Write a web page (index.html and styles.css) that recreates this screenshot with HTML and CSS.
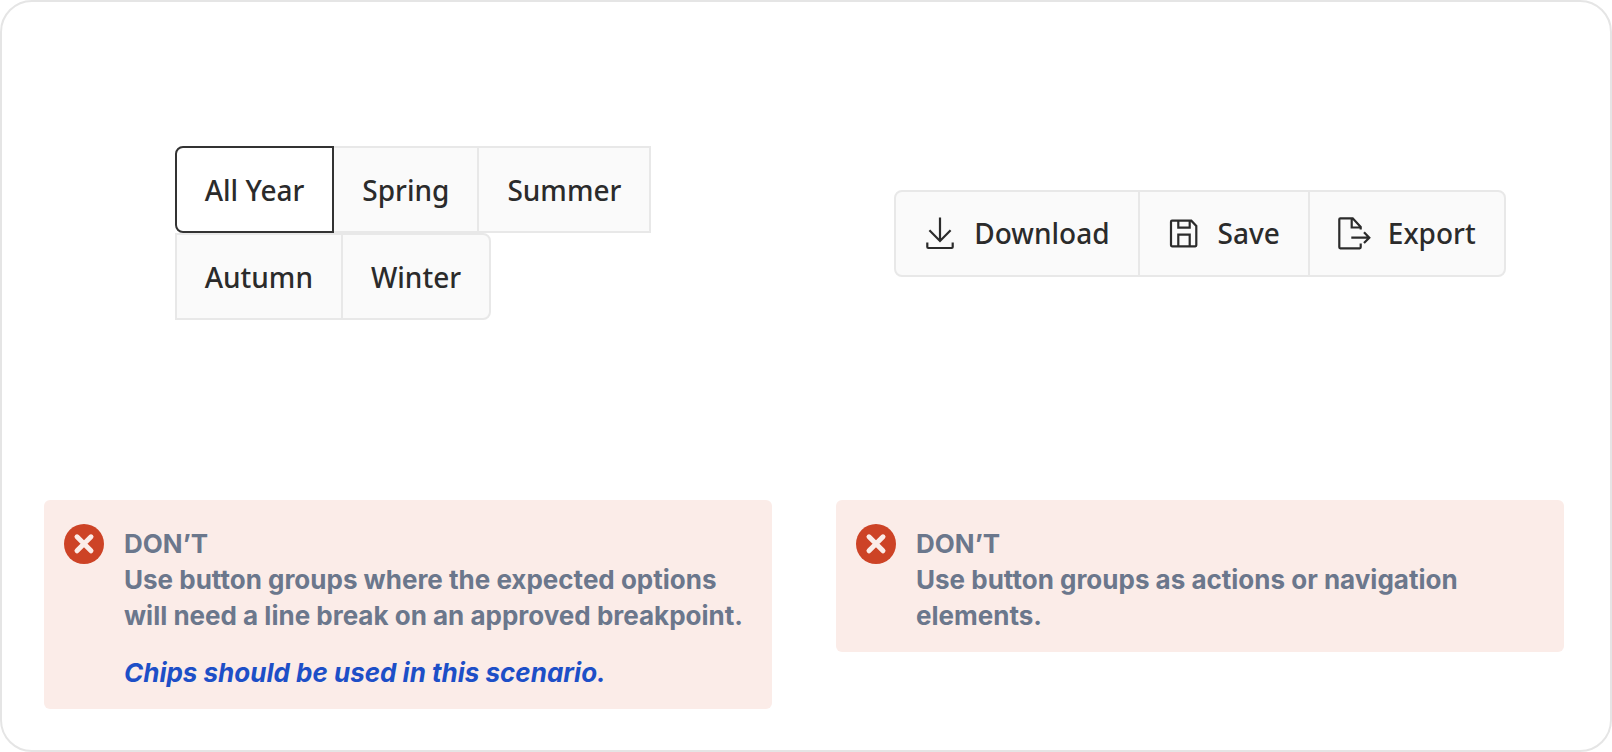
FILE: index.html
```html
<!DOCTYPE html>
<html lang="en">
<head>
<meta charset="utf-8">
<meta name="viewport" content="width=device-width, initial-scale=1">
<title>Button group usage</title>
<link rel="stylesheet" href="styles.css">
</head>
<body>
<main class="card">
  <section class="example">
    <div class="stage stage-wrapped">
      <div class="rows" role="group" aria-label="Season">
        <div class="row">
          <button type="button" class="btn first selected" aria-pressed="true">All Year</button>
          <button type="button" class="btn">Spring</button>
          <button type="button" class="btn">Summer</button>
        </div>
        <div class="row">
          <button type="button" class="btn">Autumn</button>
          <button type="button" class="btn last">Winter</button>
        </div>
      </div>
    </div>
    <div class="notice">
      <svg class="badge" viewBox="0 0 40 40" aria-hidden="true"><circle cx="20" cy="20" r="20" fill="#cd4326"/><path d="M13 12.800l14 14M27 12.800l-14 14" stroke="#fbece8" stroke-width="5" stroke-linecap="round"/></svg>
      <div class="copy">
        <p>DON’T</p>
        <p>Use button groups where the expected options will need a line break on an approved breakpoint.</p>
        <p class="hint"><a href="#chips">Chips should be used in this scenario.</a></p>
      </div>
    </div>
  </section>
  <section class="example">
    <div class="stage">
      <div class="row" role="group" aria-label="File actions">
        <button type="button" class="btn first"><svg class="icon" viewBox="0 0 32 32" aria-hidden="true"><path d="M16 .5V24M5.4 13.3L16 24l10.6-10.7M3.3 25.5V30q0 1 1 1h23.4q1 0 1-1v-4.500"/></svg>Download</button>
        <button type="button" class="btn"><svg class="icon" viewBox="0 0 32 32" aria-hidden="true"><path d="M4 3.700h19.300l5 5.300v19.300q0 1-1 1H4q-1 0-1-1V4.700q0-1 1-1zM10.300 3.700v7h11.400v-7M10.300 29.300V17.700h11.400v11.600"/></svg>Save</button>
        <button type="button" class="btn last"><svg class="icon" viewBox="0 0 32 32" aria-hidden="true"><path d="M22.700 12.500V10l-8-8.700H2.300q-1 0-1 1v28q0 1 1 1h19.400q1 0 1-1V26.500M13.700 1.300V10.500h9M13.300 20.700h18M26 15.300l5.300 5.400L26 26"/></svg>Export</button>
      </div>
    </div>
    <div class="notice">
      <svg class="badge" viewBox="0 0 40 40" aria-hidden="true"><circle cx="20" cy="20" r="20" fill="#cd4326"/><path d="M13 12.800l14 14M27 12.800l-14 14" stroke="#fbece8" stroke-width="5" stroke-linecap="round"/></svg>
      <div class="copy">
        <p>DON’T</p>
        <p>Use button groups as actions or navigation elements.</p>
      </div>
    </div>
  </section>
</main>
</body>
</html>
```
FILE: styles.css
```css
* { box-sizing: border-box; }
body { margin: 0; background: #fff; }
.card {
  display: grid;
  grid-template-columns: 1fr 1fr;
  column-gap: 64px;
  min-height: 100vh;
  padding: 0 46px 40px 42px;
  border: 2px solid #e5e5e5;
  border-radius: 32px;
}
.stage {
  display: flex;
  align-items: center;
  justify-content: center;
  min-height: 462px;
  margin-bottom: 36px;
}
.stage-wrapped { padding-left: 10px; }
.row { display: flex; }
.btn {
  display: flex;
  align-items: center;
  gap: 18px;
  height: 87px;
  margin: 0 0 0 -2px;
  padding: 0 28px;
  border: 2px solid #e8e8e8;
  border-radius: 0;
  background: #fafafa;
  color: #2b2b2b;
  font: 500 28px/36px "Noto Sans", sans-serif;
}
.row .btn:first-child { margin-left: 0; }
.first { border-radius: 8px 0 0 8px; }
.last { border-radius: 0 8px 8px 0; }
.selected { z-index: 1; border-color: #333; background: #fff; }
.icon {
  width: 32px;
  height: 32px;
  overflow: visible;
  fill: none;
  stroke: #2b2b2b;
  stroke-width: 2.2;
}
.notice {
  display: flex;
  gap: 20px;
  padding: 24px 20px 18px;
  border-radius: 6px;
  background: #fbece8;
}
.badge { flex: none; width: 40px; height: 40px; fill: none; }
.copy {
  padding-top: 2px;
  color: #6b778c;
  font: 700 26px/36px Inter, sans-serif;
}
.copy p { margin: 0; }
.copy .hint { margin-top: 21px; }
.hint a { color: #1d4fc7; font-style: italic; text-decoration: none; }
```
